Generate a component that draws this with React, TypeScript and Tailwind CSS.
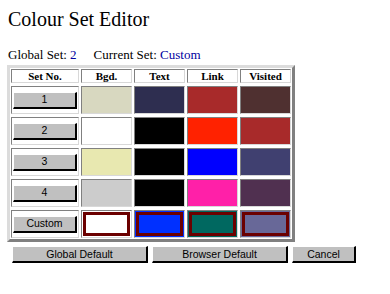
import React from 'react'

const serif = "font-['Liberation_Serif','Times_New_Roman',serif]"
const sans = "font-['Liberation_Sans',Arial,sans-serif]"

const sets = [
  { label: '1', colors: ['#d8d8c0', '#2e2e50', '#a82a2a', '#4f3030'] },
  { label: '2', colors: ['#ffffff', '#000000', '#ff2200', '#a82a2a'] },
  { label: '3', colors: ['#e8e8b0', '#000000', '#0000ff', '#404070'] },
  { label: '4', colors: ['#cccccc', '#000000', '#ff20a8', '#503050'] },
]

const customColors = ['#ffffff', '#0030ff', '#006860', '#686898']

const headers = ['Set No.', 'Bgd.', 'Text', 'Link', 'Visited']

const cell = 'border border-t-[#808080] border-l-[#808080] border-b-[#d8d8d8] border-r-[#d8d8d8]'

function RetroButton({ children, className = '' }: { children: React.ReactNode; className?: string }) {
  return (
    <button
      className={`${sans} flex h-[17px] items-center justify-center border-t border-l border-t-white border-l-white border-r-2 border-b-2 border-r-black border-b-black bg-[#c0c0c0] text-[10.5px] leading-none text-black ${className}`}
    >
      {children}
    </button>
  )
}

export default function App() {
  return (
    <div className="min-h-screen w-full bg-white text-black">
      {/* Title */}
      <h1 className={`${serif} pl-[8px] pt-[8px] text-[20px] font-normal leading-[23px]`}>Colour Set Editor</h1>

      {/* Current state */}
      <p className={`${serif} mt-[16px] pl-[8px] text-[13px] leading-[15px]`}>
        Global Set: <span className="text-[#0000a0]">2</span>
        <span className="ml-[17px]">Current Set: </span>
        <span className="text-[#0000a0]">Custom</span>
      </p>

      {/* Colour table */}
      <div className="ml-[7px] mt-[2px] inline-block border-[3px] border-t-[#dcdcdc] border-l-[#dcdcdc] border-b-[#808080] border-r-[#808080] bg-white p-[1px]">
        <div className="grid grid-cols-[68px_repeat(4,51px)] gap-x-[2px] gap-y-[3px]">
          {headers.map((h) => (
            <div
              key={h}
              className={`${cell} ${serif} flex h-[14px] items-center justify-center text-[11px] font-bold leading-[12px]`}
            >
              {h}
            </div>
          ))}

          {sets.map((set) => (
            <React.Fragment key={set.label}>
              <div className={`${cell} flex h-[28px] items-center justify-center`}>
                <RetroButton className="w-[64px]">{set.label}</RetroButton>
              </div>
              {set.colors.map((c, i) => (
                <div key={i} className={`${cell} h-[28px]`} style={{ backgroundColor: c }} />
              ))}
            </React.Fragment>
          ))}

          <div className={`${cell} flex h-[28px] items-center justify-center`}>
            <RetroButton className="w-[64px]">Custom</RetroButton>
          </div>
          {customColors.map((c, i) => (
            <div key={i} className={`${cell} flex h-[28px] p-[1px]`} style={{ backgroundColor: c }}>
              <div className="flex-1 border-[3px] border-[#6b0000]" />
            </div>
          ))}
        </div>
      </div>

      {/* Actions */}
      <div className="ml-[12px] mt-[4px] flex gap-[4px]">
        <RetroButton className="w-[136px]">Global Default</RetroButton>
        <RetroButton className="w-[136px]">Browser Default</RetroButton>
        <RetroButton className="w-[64px]">Cancel</RetroButton>
      </div>
    </div>
  )
}
